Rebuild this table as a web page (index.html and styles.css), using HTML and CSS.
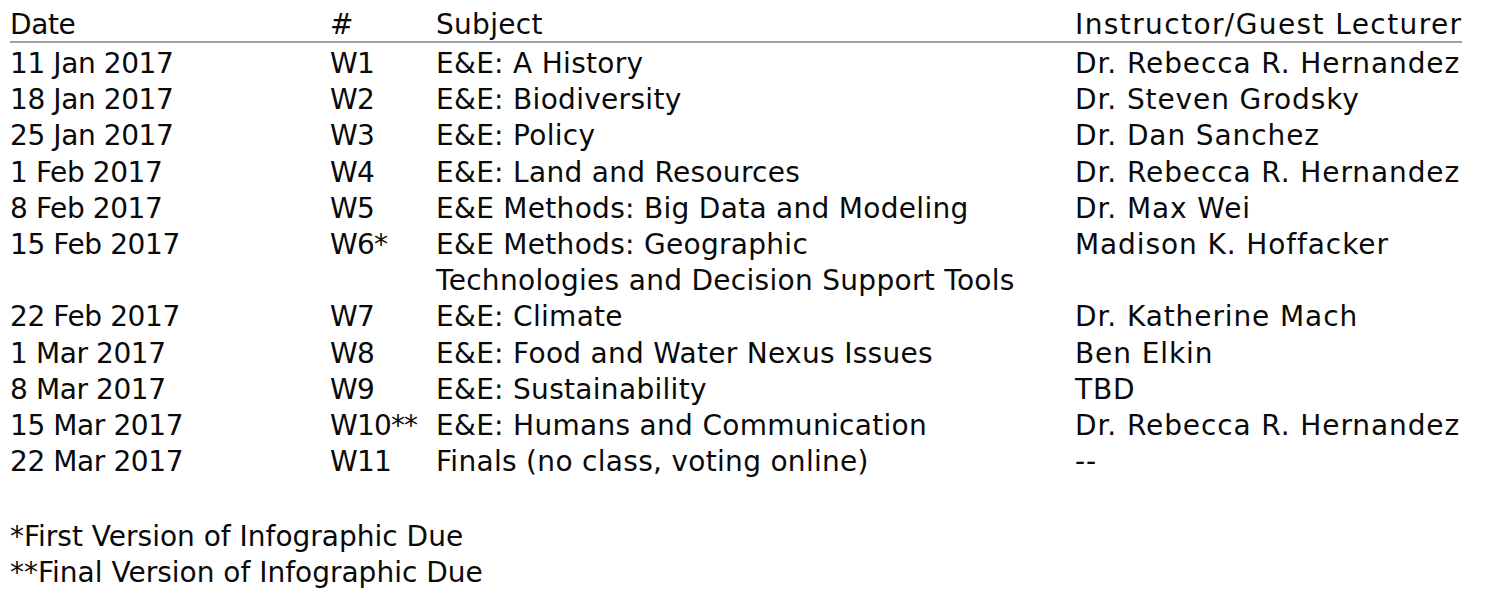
FILE: index.html
```html
<!DOCTYPE html>
<html>
<head>
<meta charset="utf-8">
<link rel="stylesheet" href="styles.css">
</head>
<body>
<div class="page">
<table class="sched">
<colgroup><col class="c-date"><col class="c-num"><col class="c-subj"><col class="c-inst"></colgroup>
<thead>
<tr><th class="date">Date</th><th class="num">#</th><th>Subject</th><th class="wide">Instructor/Guest Lecturer</th></tr>
</thead>
<tbody>
<tr><td class="date">11 Jan 2017</td><td class="num">W1</td><td>E&amp;E: A History</td><td class="wide">Dr. Rebecca R. Hernandez</td></tr>
<tr><td class="date">18 Jan 2017</td><td class="num">W2</td><td>E&amp;E: Biodiversity</td><td class="wide">Dr. Steven Grodsky</td></tr>
<tr><td class="date">25 Jan 2017</td><td class="num">W3</td><td>E&amp;E: Policy</td><td class="wide">Dr. Dan Sanchez</td></tr>
<tr><td class="date">1 Feb 2017</td><td class="num">W4</td><td>E&amp;E: Land and Resources</td><td class="wide">Dr. Rebecca R. Hernandez</td></tr>
<tr><td class="date">8 Feb 2017</td><td class="num">W5</td><td>E&amp;E Methods: Big Data and Modeling</td><td class="wide">Dr. Max Wei</td></tr>
<tr><td class="date">15 Feb 2017</td><td class="num">W6*</td><td>E&amp;E Methods: Geographic<br>Technologies and Decision Support Tools</td><td class="wide">Madison K. Hoffacker</td></tr>
<tr><td class="date">22 Feb 2017</td><td class="num">W7</td><td>E&amp;E: Climate</td><td class="wide">Dr. Katherine Mach</td></tr>
<tr><td class="date">1 Mar 2017</td><td class="num">W8</td><td>E&amp;E: Food and Water Nexus Issues</td><td class="wide">Ben Elkin</td></tr>
<tr><td class="date">8 Mar 2017</td><td class="num">W9</td><td>E&amp;E: Sustainability</td><td class="wide">TBD</td></tr>
<tr><td class="date">15 Mar 2017</td><td class="num">W10**</td><td>E&amp;E: Humans and Communication</td><td class="wide">Dr. Rebecca R. Hernandez</td></tr>
<tr><td class="date">22 Mar 2017</td><td class="num">W11</td><td>Finals (no class, voting online)</td><td class="wide">--</td></tr>
</tbody>
</table>
<div class="notes">
<p>*First Version of Infographic Due</p>
<p>**Final Version of Infographic Due</p>
</div>
</div>
</body>
</html>
```
FILE: styles.css
```css
html, body { margin: 0; padding: 0; background: #fff; }
body {
  font-family: "DejaVu Sans", sans-serif;
  color: #0a0a0a;
  font-size: 28px;
  letter-spacing: 0.3px;
}
.page { padding: 10px 0 0 10px; }
.sched { border-collapse: collapse; table-layout: fixed; width: 1452px; }
.c-date { width: 320px; }
.c-num { width: 106px; }
.c-subj { width: 639px; }
.c-inst { width: 387px; }
.sched th, .sched td {
  padding: 0; text-align: left; vertical-align: top;
  font-weight: normal; line-height: 36.2px; white-space: nowrap;
}
.sched th { line-height: 30px; padding-bottom: 1px; border-bottom: 2px solid #a3a3a3; }
.sched tbody tr:first-child td { padding-top: 3px; }
.sched .date { letter-spacing: -0.4px; }
.sched .num { letter-spacing: -0.8px; }
.sched .wide { letter-spacing: 0.9px; }
.sched th.wide { letter-spacing: 1.4px; }
.notes { margin-top: 39px; letter-spacing: 0; }
.notes p { margin: 0; line-height: 36px; }
```
